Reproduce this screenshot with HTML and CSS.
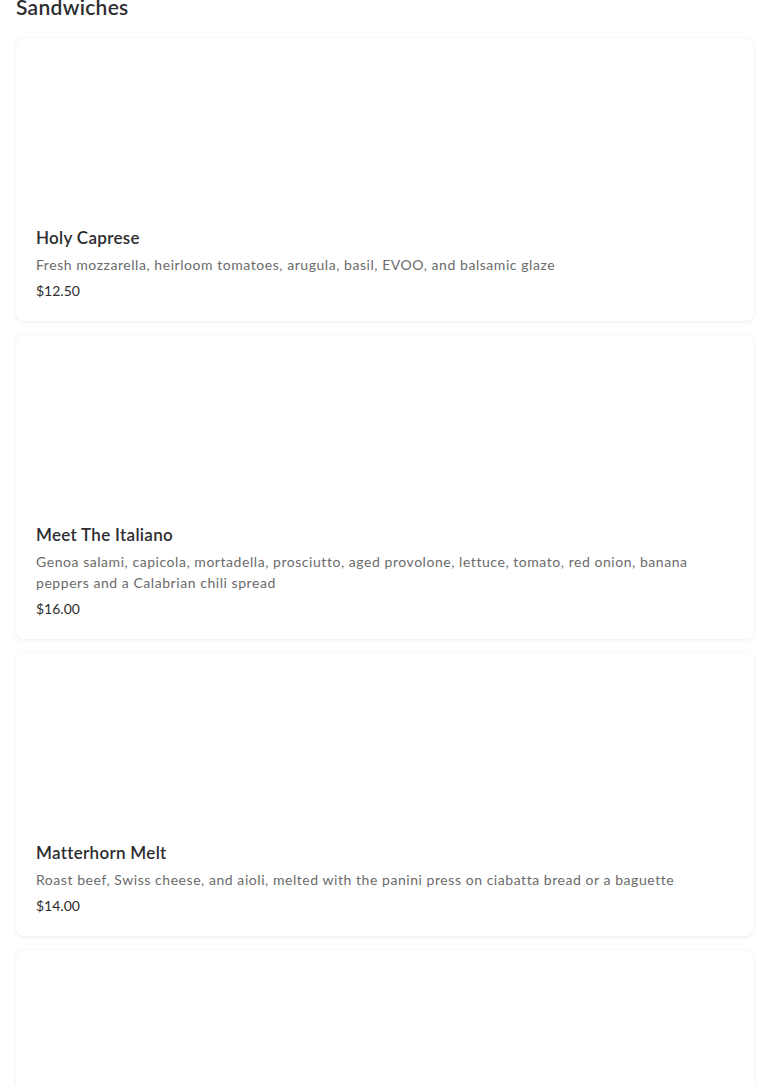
FILE: index.html
```html
<!DOCTYPE html>
<html lang="en">
<head>
<meta charset="utf-8">
<title>Sandwiches</title>
<link rel="stylesheet" href="styles.css">
</head>
<body>
<main class="menu">
  <h2 class="section-title">Sandwiches</h2>
  <div class="items">
    <article class="card">
      <div class="card-image"></div>
      <div class="card-body">
        <h3 class="item-name">Holy Caprese</h3>
        <p class="item-desc">Fresh mozzarella, heirloom tomatoes, arugula, basil, EVOO, and balsamic glaze</p>
        <p class="item-price">$12.50</p>
      </div>
    </article>
    <article class="card">
      <div class="card-image"></div>
      <div class="card-body">
        <h3 class="item-name">Meet The Italiano</h3>
        <p class="item-desc">Genoa salami, capicola, mortadella, prosciutto, aged provolone, lettuce, tomato, red onion, banana peppers and a Calabrian chili spread</p>
        <p class="item-price">$16.00</p>
      </div>
    </article>
    <article class="card">
      <div class="card-image"></div>
      <div class="card-body">
        <h3 class="item-name">Matterhorn Melt</h3>
        <p class="item-desc">Roast beef, Swiss cheese, and aioli, melted with the panini press on ciabatta bread or a baguette</p>
        <p class="item-price">$14.00</p>
      </div>
    </article>
    <article class="card">
      <div class="card-image"></div>
      <div class="card-body">
        <h3 class="item-name">&nbsp;</h3>
      </div>
    </article>
  </div>
</main>
</body>
</html>
```

FILE: styles.css
```css
html, body {
  margin: 0;
  padding: 0;
  background: #ffffff;
}
body {
  font-family: "Lato", "Inter", "Liberation Sans", sans-serif;
  color: #2b2b2b;
}
.menu {
  padding: 0 16px;
  margin-top: -7px;
}
.section-title {
  margin: 0 0 17px;
  font-size: 21px;
  line-height: 28px;
  font-weight: 600;
  color: #2e2e30;
  letter-spacing: 0.3px;
}
.items {
  display: flex;
  flex-direction: column;
  gap: 14px;
}
.card {
  background: #fff;
  border-radius: 8px;
  box-shadow: 0 1px 4px rgba(0, 0, 0, 0.07), 0 0 1px rgba(0, 0, 0, 0.05);
  overflow: hidden;
}
.card-image {
  height: 188px;
}
.card-body {
  padding: 0 20px 20px;
}
.item-name {
  margin: 0 0 4px;
  font-size: 17px;
  line-height: 24px;
  font-weight: 600;
  color: #2d2d2f;
  letter-spacing: 0.3px;
}
.item-desc {
  margin: 0 0 6px;
  font-size: 14px;
  line-height: 21px;
  color: #6b6b6b;
  letter-spacing: 0.55px;
}
.item-price {
  margin: 0;
  font-size: 14px;
  line-height: 20px;
  color: #2d2d2f;
}
```
